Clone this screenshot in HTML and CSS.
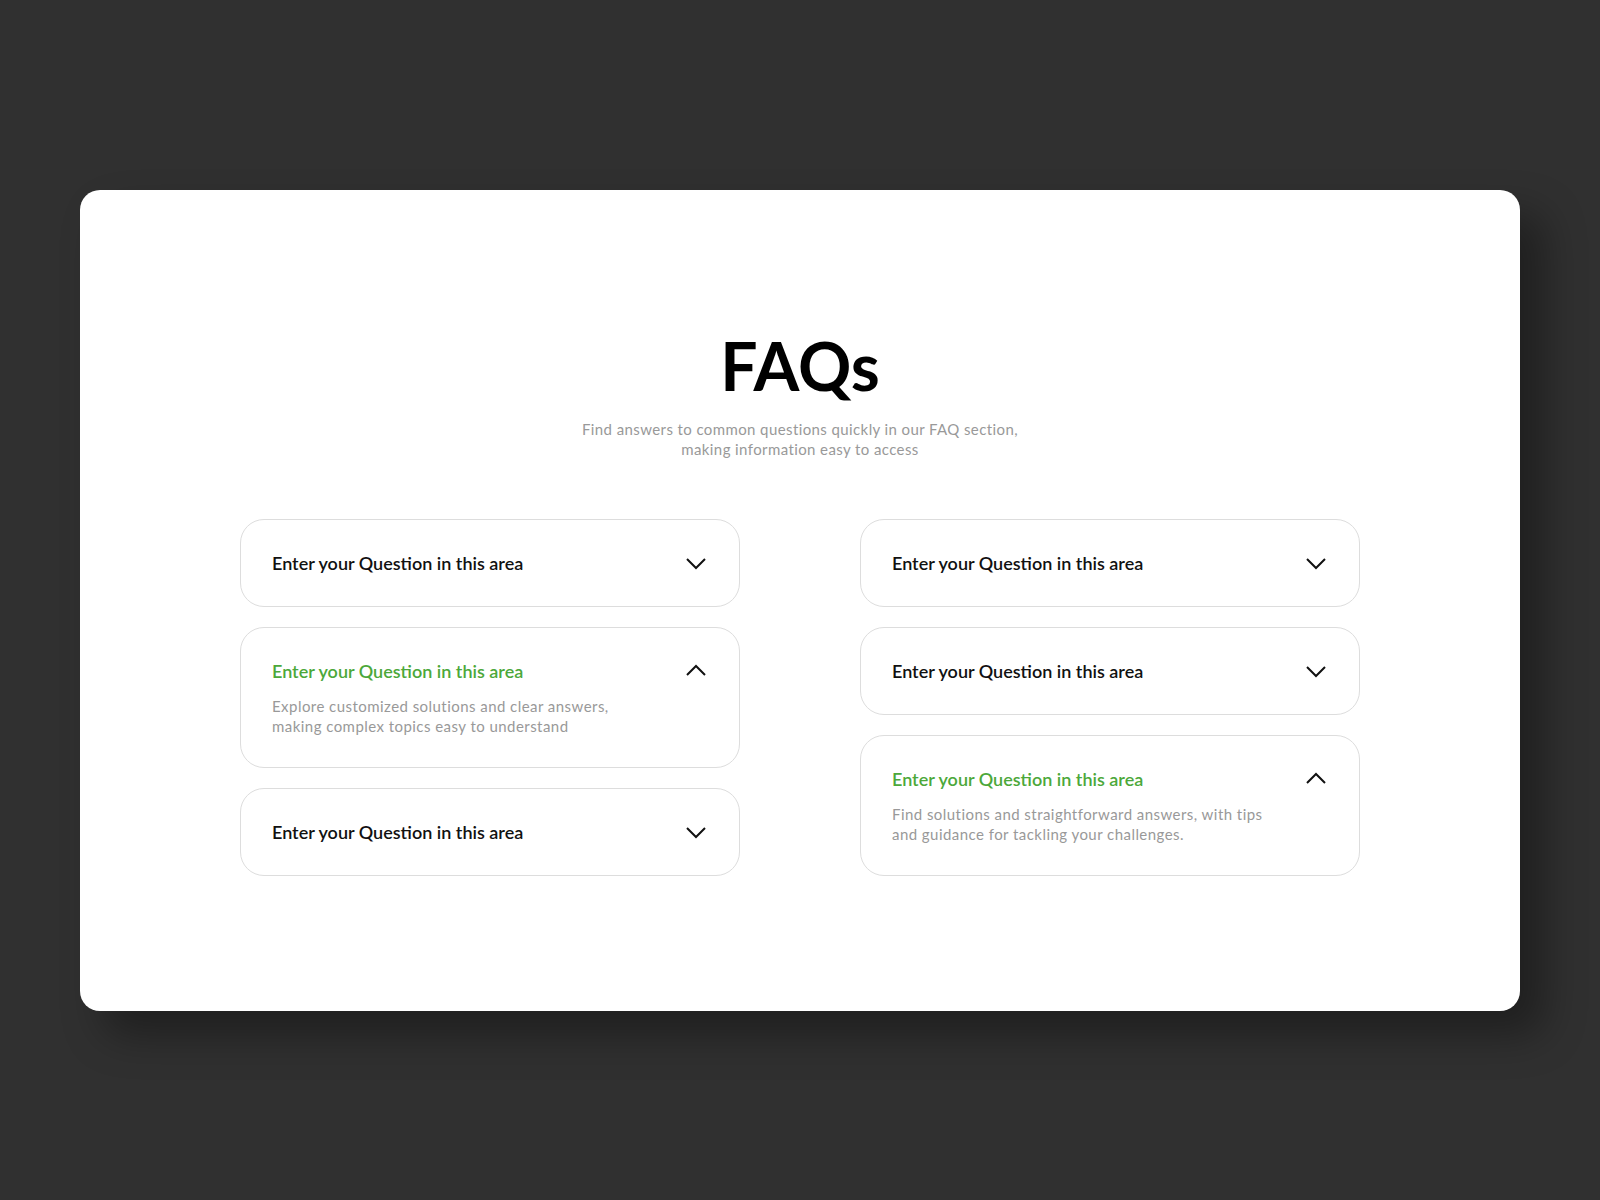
FILE: index.html
```html
<!DOCTYPE html>
<html lang="en">
<head>
  <meta charset="UTF-8">
  <meta name="viewport" content="width=device-width, initial-scale=1.0">
  <title>FAQs</title>
  <link rel="stylesheet" href="styles.css">
</head>

<body>
  <div class="panel">
    <h1 class="title">FAQs</h1>
    <p class="subtitle">Find answers to common questions quickly in our FAQ section,<br>making information easy to access</p>

    <div class="faq-grid">
      <div class="faq-col">
        <div class="faq-item">
          <div class="faq-head">
            <span class="faq-q">Enter your Question in this area</span>
            <svg class="chev" viewBox="0 0 24 24"><polyline points="3 8 12 17 21 8"/></svg>
          </div>
        </div>
        <div class="faq-item open">
          <div class="faq-head">
            <span class="faq-q">Enter your Question in this area</span>
            <svg class="chev" viewBox="0 0 24 24"><polyline points="3 16 12 7 21 16"/></svg>
          </div>
          <p class="faq-a">Explore customized solutions and clear answers,<br>making complex topics easy to understand</p>
        </div>
        <div class="faq-item">
          <div class="faq-head">
            <span class="faq-q">Enter your Question in this area</span>
            <svg class="chev" viewBox="0 0 24 24"><polyline points="3 8 12 17 21 8"/></svg>
          </div>
        </div>
      </div>

      <div class="faq-col">
        <div class="faq-item">
          <div class="faq-head">
            <span class="faq-q">Enter your Question in this area</span>
            <svg class="chev" viewBox="0 0 24 24"><polyline points="3 8 12 17 21 8"/></svg>
          </div>
        </div>
        <div class="faq-item">
          <div class="faq-head">
            <span class="faq-q">Enter your Question in this area</span>
            <svg class="chev" viewBox="0 0 24 24"><polyline points="3 8 12 17 21 8"/></svg>
          </div>
        </div>
        <div class="faq-item open">
          <div class="faq-head">
            <span class="faq-q">Enter your Question in this area</span>
            <svg class="chev" viewBox="0 0 24 24"><polyline points="3 16 12 7 21 16"/></svg>
          </div>
          <p class="faq-a">Find solutions and straightforward answers, with tips<br>and guidance for tackling your challenges.</p>
        </div>
      </div>
    </div>
  </div>
</body>
</html>
```

FILE: styles.css
```css
body {
  margin: 0;
  padding: 190px 80px;
  background-color: #303030;
  font-family: "Lato", "Noto Sans", sans-serif;
}

.panel {
  height: 821px;
  box-sizing: border-box;
  padding-top: 143px;
  background-color: #fff;
  border-radius: 20px;
  box-shadow: 24px 24px 40px rgba(0, 0, 0, 0.35);
}

.title {
  margin: 0;
  text-align: center;
  font-size: 66px;
  line-height: 66px;
  font-weight: 700;
  color: #000;
}

.subtitle {
  margin: 20px 0 0;
  text-align: center;
  font-size: 15px;
  line-height: 20px;
  letter-spacing: 0.4px;
  color: #999;
}

.faq-grid {
  display: flex;
  justify-content: center;
  gap: 120px;
  margin-top: 60px;
}

.faq-col {
  width: 500px;
  display: flex;
  flex-direction: column;
  gap: 20px;
}

.faq-item {
  border: 1px solid #ddd;
  border-radius: 24px;
  padding: 31px;
}

.faq-head {
  display: flex;
  align-items: center;
  justify-content: space-between;
  height: 24px;
}

.faq-q {
  font-size: 18px;
  font-weight: 600;
  color: #111;
}

.open .faq-q {
  color: #4ca83a;
}

.chev {
  width: 24px;
  height: 24px;
  fill: none;
  stroke: #111;
  stroke-width: 2;
}

.faq-a {
  margin: 13px 0 0;
  font-size: 15px;
  line-height: 20px;
  letter-spacing: 0.45px;
  color: #999;
}
```
